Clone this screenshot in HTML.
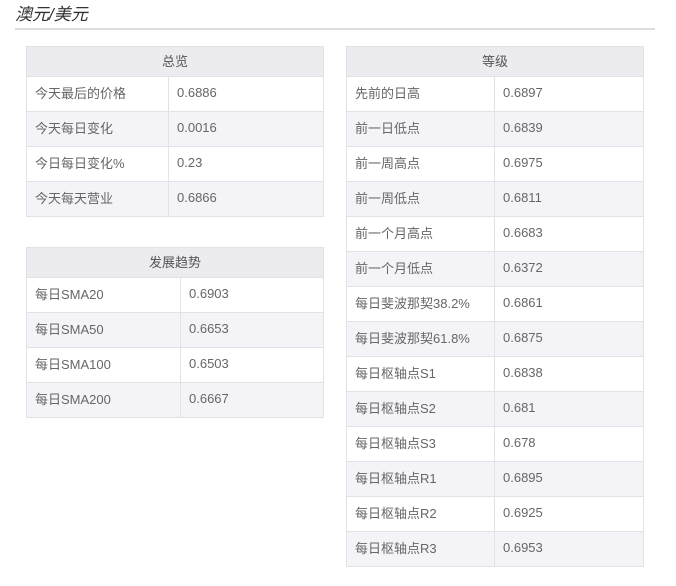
<!DOCTYPE html><html><head><meta charset="utf-8"><style>
body{margin:0;background:#fff;font-family:"Liberation Sans","Noto Sans CJK SC",sans-serif;color:#666;font-size:13px;}
.t{position:absolute;left:15px;top:4px;width:640px;height:24px;border-bottom:2px solid #ddd;font-style:italic;font-size:17px;color:#333;line-height:22px;}
table{position:absolute;border-collapse:collapse;table-layout:fixed;}
td,th{border:1px solid #e2e2e6;height:34px;padding:0 0 3px 8px;box-sizing:border-box;text-align:left;font-weight:normal;}
td{height:35px}
th{height:30px;background:#ececf0;text-align:center;padding:0 0 2px 0;color:#555}
tr:nth-child(odd) td{background:#f4f4f8}
</style></head><body>
<div class="t">澳元/美元</div>
<table style="left:26px;top:46px;width:298px"><col style="width:142px"><col>
<tr><th colspan="2">总览</th></tr>
<tr><td>今天最后的价格</td><td>0.6886</td></tr>
<tr><td>今天每日变化</td><td>0.0016</td></tr>
<tr><td>今日每日变化%</td><td>0.23</td></tr>
<tr><td>今天每天营业</td><td>0.6866</td></tr>
</table>
<table style="left:26px;top:247px;width:298px"><col style="width:154px"><col>
<tr><th colspan="2">发展趋势</th></tr>
<tr><td>每日SMA20</td><td>0.6903</td></tr>
<tr><td>每日SMA50</td><td>0.6653</td></tr>
<tr><td>每日SMA100</td><td>0.6503</td></tr>
<tr><td>每日SMA200</td><td>0.6667</td></tr>
</table>
<table style="left:346px;top:46px;width:298px"><col style="width:148px"><col>
<tr><th colspan="2">等级</th></tr>
<tr><td>先前的日高</td><td>0.6897</td></tr>
<tr><td>前一日低点</td><td>0.6839</td></tr>
<tr><td>前一周高点</td><td>0.6975</td></tr>
<tr><td>前一周低点</td><td>0.6811</td></tr>
<tr><td>前一个月高点</td><td>0.6683</td></tr>
<tr><td>前一个月低点</td><td>0.6372</td></tr>
<tr><td>每日斐波那契38.2%</td><td>0.6861</td></tr>
<tr><td>每日斐波那契61.8%</td><td>0.6875</td></tr>
<tr><td>每日枢轴点S1</td><td>0.6838</td></tr>
<tr><td>每日枢轴点S2</td><td>0.681</td></tr>
<tr><td>每日枢轴点S3</td><td>0.678</td></tr>
<tr><td>每日枢轴点R1</td><td>0.6895</td></tr>
<tr><td>每日枢轴点R2</td><td>0.6925</td></tr>
<tr><td>每日枢轴点R3</td><td>0.6953</td></tr>
</table>
</body></html>
